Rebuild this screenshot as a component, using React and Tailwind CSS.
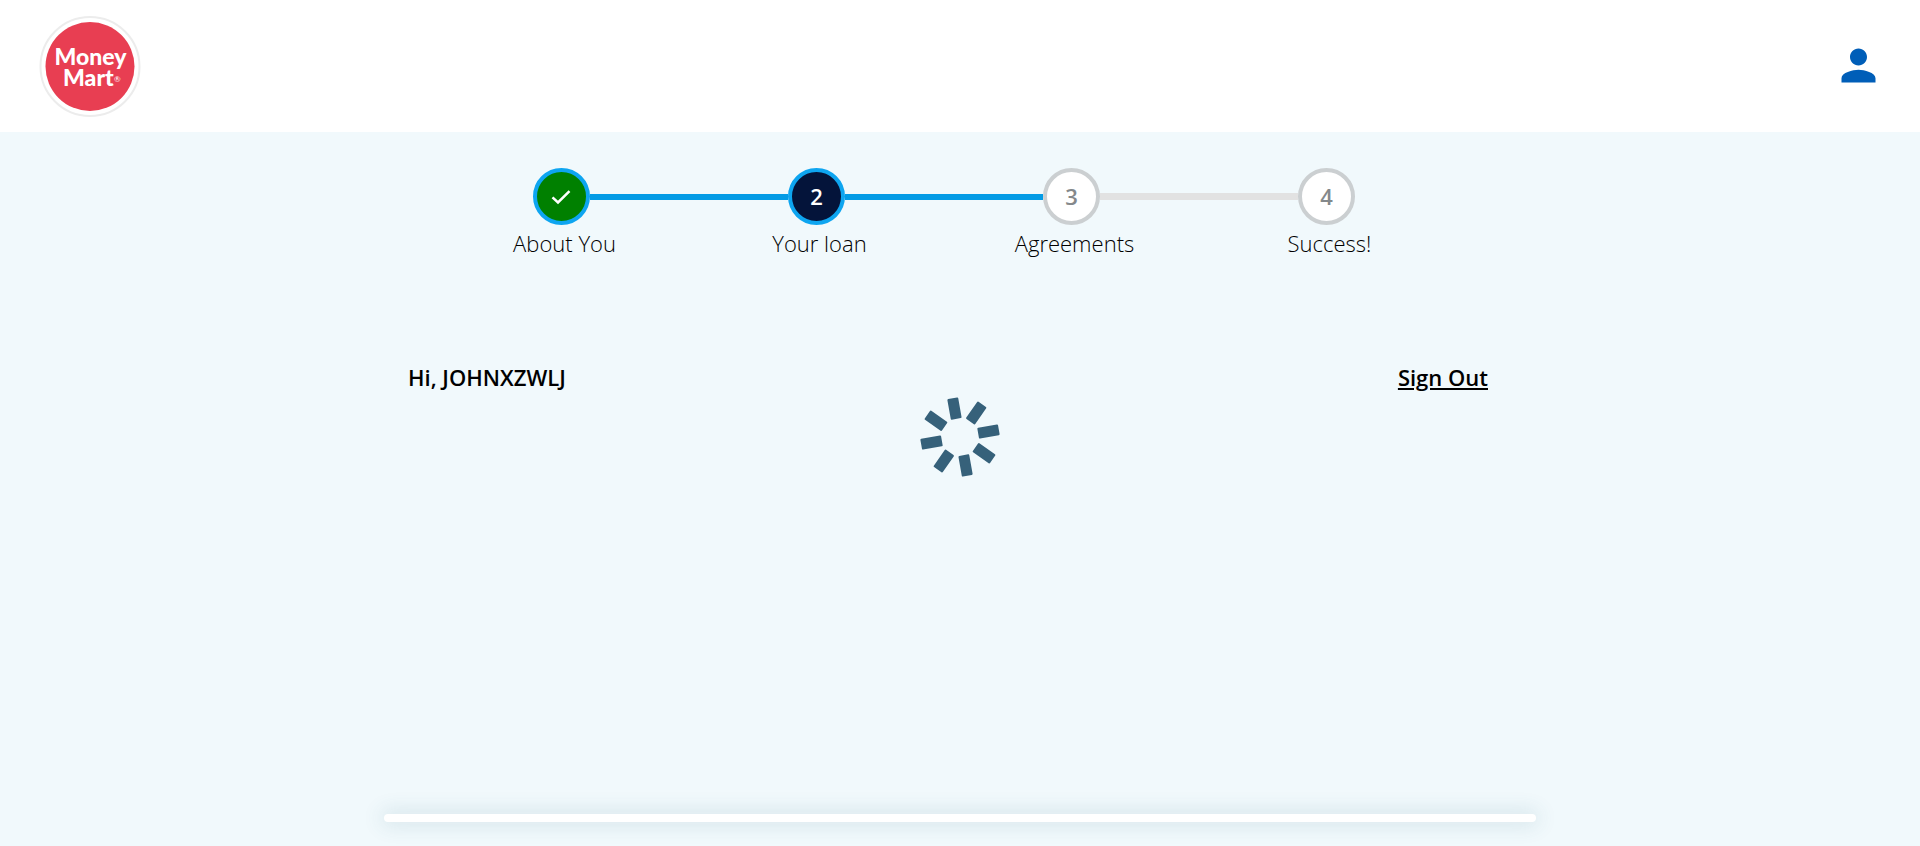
import React from "react";

const steps = [
  { label: "About You", state: "done", before: "bg-transparent", after: "h-1.5 bg-[#039be5]" },
  { label: "Your loan", state: "current", before: "h-1.5 bg-[#039be5]", after: "h-1.5 bg-[#039be5]" },
  { label: "Agreements", state: "todo", before: "h-1.5 bg-[#039be5]", after: "h-[7px] bg-[#e2e2e2]" },
  { label: "Success!", state: "todo", before: "h-[7px] bg-[#e2e2e2]", after: "bg-transparent" },
];

const circleStyles = {
  done: "border-[#0ea5f0] bg-[#008000] text-white",
  current: "border-[#0ea5f0] bg-[#04143a] text-white",
  todo: "border-[#cbcfd1] bg-white text-[#84888b]",
};

const spokes = [0, 45, 90, 135, 180, 225, 270, 315];

function Logo() {
  return (
    <svg className="size-[102px]" viewBox="0 0 102 102" role="img" aria-label="Money Mart">
      <circle cx="51" cy="51.5" r="49.5" fill="#fff" stroke="#ececec" strokeWidth="2" />
      <circle cx="51" cy="51.5" r="44.5" fill="#e83e52" />
      <g fill="#fff" fontFamily="Lato, sans-serif" fontWeight="900">
        <text x="51.5" y="50" fontSize="23" textAnchor="middle">Money</text>
        <text x="24" y="71" fontSize="23">Mart</text>
        <text x="75" y="67" fontSize="8" fontWeight="400">®</text>
      </g>
    </svg>
  );
}

function Step({ step, number }) {
  return (
    <li className="flex flex-1 flex-col" aria-current={step.state === "current" ? "step" : undefined}>
      <div className="flex items-center">
        <span className={`flex-1 ${step.before}`} />
        <span
          className={`flex size-[57px] items-center justify-center rounded-full border-4 text-[22px] font-semibold ${circleStyles[step.state]}`}
        >
          {step.state === "done" ? (
            <svg className="size-6" viewBox="0 0 24 24" fill="none" stroke="currentColor" strokeWidth="2.5" aria-label="Completed">
              <path d="M2.5 12.3 8 17.5 19.5 6.2" />
            </svg>
          ) : (
            number
          )}
        </span>
        <span className={`flex-1 ${step.after}`} />
      </div>
      <span className="pt-1 pl-1.5 text-center text-[22px] leading-7 font-light text-black">{step.label}</span>
    </li>
  );
}

function Spinner() {
  return (
    <svg className="size-20" viewBox="-40 -40 80 80" fill="#36617a" role="status" aria-label="Loading">
      {spokes.map((angle) => (
        <rect key={angle} x="-6" y="-39.5" width="11" height="21" rx="1" transform={`rotate(${angle - 10})`} />
      ))}
    </svg>
  );
}

export default function App() {
  return (
    <div className="min-h-screen bg-[#f1f9fc] font-['Open_Sans',sans-serif] text-black">
      <header className="flex h-[132px] items-center justify-between bg-white px-9 pb-px">
        <a href="#home" className="ml-[3px]">
          <Logo />
        </a>
        <button type="button" aria-label="Account">
          <svg className="size-[51px]" viewBox="0 0 24 24" fill="#005eb8">
            <path d="M12 12c2.21 0 4-1.79 4-4s-1.79-4-4-4-4 1.79-4 4 1.79 4 4 4zm0 2c-2.67 0-8 1.34-8 4v2h16v-2c0-2.66-5.33-4-8-4z" />
          </svg>
        </button>
      </header>
      <main className="mx-auto w-3/5 pt-9">
        <nav aria-label="Progress" className="pr-8">
          <ol className="mx-auto flex max-w-[1020px]">
            {steps.map((step, index) => (
              <Step key={step.label} step={step} number={index + 1} />
            ))}
          </ol>
        </nav>
        <div className="flex justify-between pt-[104px] pr-12 pb-1 pl-6 text-[22px] leading-8 font-semibold">
          <p>Hi, JOHNXZWLJ</p>
          <a href="#sign-out" className="underline">Sign Out</a>
        </div>
        <div className="flex justify-center">
          <Spinner />
        </div>
        <section className="mt-[337px] h-2 rounded bg-white shadow-[0_0_20px_3px_rgba(54,110,130,0.16)]" />
      </main>
    </div>
  );
}
